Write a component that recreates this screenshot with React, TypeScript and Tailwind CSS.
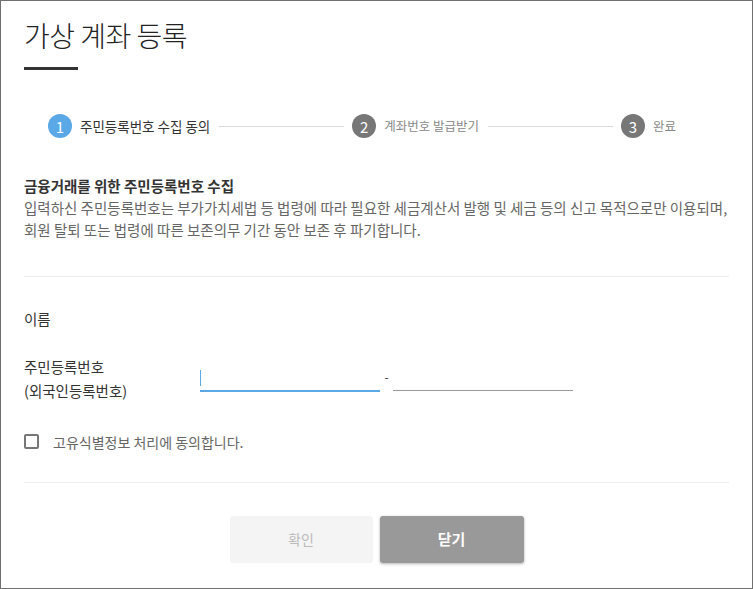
import { Fragment } from "react";

const steps = [
  { no: 1, label: "주민등록번호 수집 동의", active: true },
  { no: 2, label: "계좌번호 발급받기", active: false },
  { no: 3, label: "완료", active: false },
];

function Stepper() {
  return (
    <div className="ml-[24px] mt-[44px] flex h-[24px] w-[628px] items-center">
      {steps.map((s, i) => (
        <Fragment key={s.no}>
          <span
            className={
              s.active
                ? "flex h-[24px] w-[24px] shrink-0 items-center justify-center rounded-full bg-[#5ba8e6] text-[15px] leading-none text-white"
                : "flex h-[24px] w-[24px] shrink-0 items-center justify-center rounded-full bg-[#777777] text-[15px] leading-none text-white"
            }
          >
            {s.no}
          </span>
          <span
            className={
              s.active
                ? "ml-[8px] shrink-0 text-[13.5px] leading-[20px] text-[#333333]"
                : "ml-[8px] shrink-0 text-[12.5px] leading-[20px] text-[#888888]"
            }
          >
            {s.label}
          </span>
          {i < steps.length - 1 && (
            <span className="ml-[9px] mr-[8px] h-px flex-1 bg-[#dddddd]" />
          )}
        </Fragment>
      ))}
    </div>
  );
}

export default function App() {
  return (
    <div className="h-[589px] w-[753px] border border-[#707070] bg-white px-[23px] pt-[16px] font-['Noto_Sans_CJK_KR',sans-serif]">
      {/* header */}
      <h1 className="text-[28px] font-light leading-[36px] tracking-[-0.5px] text-[#222222]">
        가상 계좌 등록
      </h1>
      <div className="mt-[14px] h-[3px] w-[54px] bg-[#333333]" />

      <Stepper />

      {/* notice */}
      <div className="mt-[37px]">
        <p className="text-[14.5px] font-bold leading-[22px] text-[#333333]">
          금융거래를 위한 주민등록번호 수집
        </p>
        <p className="text-[14.5px] leading-[22px] text-[#666666]">
          입력하신 주민등록번호는 부가가치세법 등 법령에 따라 필요한 세금계산서 발행 및 세금 등의 신고 목적으로만 이용되며,
          <br />
          회원 탈퇴 또는 법령에 따른 보존의무 기간 동안 보존 후 파기합니다.
        </p>
      </div>

      <div className="mt-[35px] h-px bg-[#eeeeee]" />

      {/* form */}
      <div className="mt-[31px] text-[14.5px] leading-[22px] text-[#333333]">
        이름
      </div>

      <div className="mt-[25px] flex items-start">
        <div className="w-[176px] text-[14.5px] leading-[24px] text-[#333333]">
          <div>주민등록번호</div>
          <div>(외국인등록번호)</div>
        </div>
        <div className="flex h-[37px] w-[180px] items-end border-b-2 border-[#5ba8e6] pb-[4px]">
          <span className="h-[16px] w-px bg-[#5ba8e6]" />
        </div>
        <span className="mt-[14px] w-[13px] text-center text-[12px] leading-[16px] text-[#333333]">
          -
        </span>
        <div className="h-[36px] w-[180px] border-b border-[#999999]" />
      </div>

      <label className="mt-[31px] flex h-[15px] items-center">
        <span className="h-[15px] w-[15px] rounded-[2px] border-2 border-[#777777]" />
        <span className="ml-[14px] text-[14px] leading-[20px] text-[#666666]">
          고유식별정보 처리에 동의합니다.
        </span>
      </label>

      <div className="mt-[33px] h-px bg-[#eeeeee]" />

      {/* actions */}
      <div className="mt-[33px] flex justify-center gap-[7px]">
        <button className="h-[47px] w-[143px] rounded-[3px] bg-[#f4f4f4] text-[14px] text-[#bbbbbb]">
          확인
        </button>
        <button className="h-[47px] w-[144px] rounded-[3px] bg-[#999999] text-[15px] font-bold text-white shadow-[0_1px_3px_rgba(0,0,0,0.3)]">
          닫기
        </button>
      </div>
    </div>
  );
}
